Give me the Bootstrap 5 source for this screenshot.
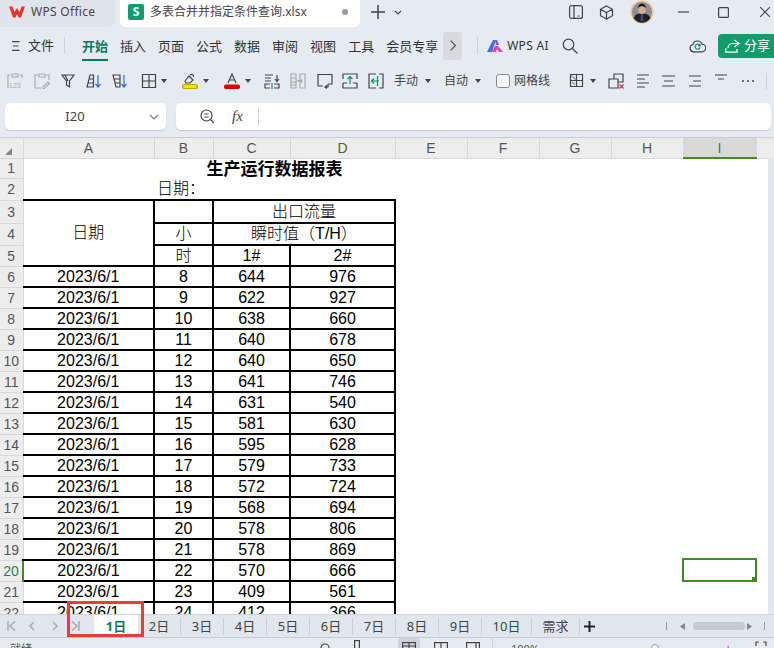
<!DOCTYPE html>
<html lang="zh-CN">
<head>
  <meta charset="UTF-8">
  <title>多表合并并指定条件查询.xlsx - WPS Office</title>
  <meta name="viewport" content="width=device-width, initial-scale=1.0"/>
  <link href="https://cdn.jsdelivr.net/npm/bootstrap@5.3.3/dist/css/bootstrap.min.css" rel="stylesheet">
  <style>
    html, body { height: 100%; }
    body { width: 774px; height: 648px; overflow: hidden; background: #e6eaf1; color: #333;
      font-family: "Noto Sans", "Noto Sans CJK SC", sans-serif; font-size: 13px; line-height: 1; }
    svg { display: block; flex: none; fill: none; stroke: #444; stroke-width: 1.2; }

    /* title bar */
    .title-bar { height: 27px; flex: none; }
    .wps-tab { width: 115px; height: 27px; background: #dfe3ea; border-radius: 0 0 6px 0; padding: 0 0 3px 9px; color: #444; font-size: 12px; letter-spacing: .3px; }
    .wps-tab span { margin-left: 6px; }
    .file-tab { width: 240px; height: 27px; margin-left: 5px; padding: 0 0 3px 8px; background: #fff; border-radius: 0 0 6px 6px; }
    .file-tab .name { margin-left: 6px; font-size: 12px; color: #444; }
    .s-icon { width: 16px; height: 16px; background: #0f9d6b; color: #fff; border-radius: 2px; font-size: 12px; font-weight: 700; }
    .tab-dot { width: 6px; height: 6px; background: #9a9a9a; border-radius: 50%; margin-left: 35px; }
    .plus-ic { margin-top: 5px; margin-left: 11px; }
    .down-ic { margin-top: 10px; margin-left: 9px; }
    .win-tools { height: 24px; }

    /* ribbon tabs */
    .ribbon-tabs { height: 37px; flex: none; padding-left: 12px; color: #333; }
    .ribbon-tabs .rt { margin-left: 12px; height: 37px; line-height: 39px; position: relative; }
    .ribbon-tabs .rt.on { color: #0d7a5f; font-weight: 700; margin-left: 17px; }
    .ribbon-tabs .rt.on::after { content: ""; position: absolute; left: 0; right: 0; bottom: 3px; height: 2px; background: #0d7a5f; }
    .vsep { width: 1px; height: 17px; background: #cdd1d8; flex: none; }
    .more-btn { width: 19px; height: 28px; margin-left: 5px; background: #d9dadd; border-radius: 3px; }
    .ai-text { font-size: 12px; letter-spacing: .3px; }
    .share-btn { width: 56px; height: 24px; background: #0f9d6b; color: #fff; border-radius: 4px 0 0 4px; margin-left: 12px; padding-left: 7px; font-size: 13px; }
    .share-btn span { margin-left: 4px; }

    /* toolbar */
    .tool-bar { height: 34px; flex: none; padding-left: 7px; font-size: 12px; color: #444; }
    .tool-bar svg.ic { width: 16px; height: 16px; }
    .caret { width: 8px; height: 5px; }
    .m3 { margin-left: 3px; } .m4 { margin-left: 4px; } .m6 { margin-left: 6px; } .m8 { margin-left: 8px; } .m9 { margin-left: 9px; }
    .m10 { margin-left: 10px; } .m11 { margin-left: 11px; } .m12 { margin-left: 12px; } .m13 { margin-left: 13px; }
    .m14 { margin-left: 14px; } .m15 { margin-left: 15px; } .m19 { margin-left: 19px; } .m24 { margin-left: 24px; } .m29 { margin-left: 29px; } .m31 { margin-left: 31px; }
    .grid-check { width: 14px; height: 14px; border: 1px solid #888; border-radius: 3px; background: #f4f6f9; }

    /* formula bar */
    .formula-bar { height: 39px; flex: none; padding: 5px 3px 7px 5px; }
    .name-box { width: 161px; background: #fff; border-radius: 5px; box-shadow: 0 1px 1px #c3c6cb; padding: 0 7px 0 0; color: #444; }
    .name-box .cell-ref { flex: 1; text-align: center; padding-right: 4px; }
    .fx-box { flex: 1; margin-left: 10px; background: #fff; border-radius: 5px; box-shadow: 0 1px 1px #c3c6cb; padding-left: 24px; }
    .fx-label { margin-left: 17px; width: 13px; font: italic 15px "Liberation Serif", serif; color: #444; }

    /* sheet */
    .sheet-area { flex: 1; min-height: 0; overflow: hidden; background: #fff; border-top: 1px solid #c9cbce; position: relative; }
    .v-track { position: absolute; right: 0; top: 20px; bottom: 0; width: 6px; background: #e3e7ee; }
    .corner-mark { position: absolute; left: 5px; top: 10px; width: 0; height: 0; border-left: 7px solid transparent; border-bottom: 7px solid #888; }
    .xls { table-layout: fixed; width: 774px; border-collapse: collapse; font-family: "Liberation Sans", "Noto Sans CJK SC", sans-serif; font-size: 16px; color: #000; }
    .c0 { width: 23px; } .ca { width: 131px; } .cb { width: 59px; } .cc { width: 77px; } .cd { width: 105px; }
    .ce { width: 72px; } .ci { width: 73px; } .cz { width: 18px; }
    .xls th { background: #ededed; font-weight: 400; color: #555; text-align: center; font-size: 14px; height: 20px; padding: 0;
      border-right: 1px solid #d8d8d8; border-bottom: 1px solid #d8d8d8; }
    .xls td { padding: 0; height: 21px; text-align: center; white-space: nowrap; }
    .xls td.b { border: 2px solid #000; }
    .xls td.b.a { border-left: 0; }
    .xls th.hot-col { background: #d9d9d9; color: #2a7f5a; border-bottom: 2px solid #3f8f1f; }
    .xls th.hot-row { color: #2a7f5a; border-right: 2px solid #3f8f1f; }
    .xls td.report-title { font-weight: 700; font-size: 17px; padding-top: 2px; }
    .xls td.cn { font-weight: 300; }
    .xls td.date-label { text-align: left; padding-left: 3px; font-weight: 300; }
    .h1r td, .h1r th { height: 20px; }
    .h2r td, .h2r th { height: 22px; }
    .h3r td, .h3r th { height: 23px; }
    .selected-cell { position: absolute; left: 682px; top: 420px; width: 75px; height: 24px; border: 2px solid #3f8f1f; }
    .selected-cell::after { content: ""; position: absolute; right: -2px; bottom: -2px; width: 5px; height: 5px; background: #3f8f1f; }

    /* sheet tabs */
    .sheet-tabs { height: 23px; flex: none; border-top: 1px solid #cfd2d7; position: relative; color: #444; background: #e2e6ed; padding-left: 7px; }
    .tab-nav { width: 87px; }
    .nav-a { margin-left: 13px; } .nav-b { margin-left: 17px; }
    .sheet-tab { width: 43px; text-align: center; border-right: 1px solid #ccd0d6; height: 17px; line-height: 17px; }
    .sheet-tab.on { width: 44px; height: 23px; line-height: 23px; background: #fff; color: #0d7a5f; font-weight: 700; border: 0; }
    .sheet-tab.wide { width: 50px; }
    .sheet-tab.w48 { width: 48px; }
    .tick-sep { width: 1px; height: 8px; background: #999; flex: none; }
    .tick-end { margin-right: 9px; }
    .h-thumb { width: 52px; height: 8px; margin-left: 8px; background: #c7cbd1; border-radius: 4px; }
    .tri-r { margin-left: 2px; }
    .red-mark { position: absolute; left: 67px; top: 601px; width: 77px; height: 36px; border: 3px solid #f03a3a; pointer-events: none; }

    /* status bar */
    .status-bar { height: 11px; flex: none; overflow: hidden; border-top: 1px solid #c9cdd3; position: relative; color: #555; font-size: 11px; }
    .st-item { position: absolute; top: 5px; }
    .st-on { position: absolute; left: 398px; top: 0; width: 22px; height: 11px; background: #cfd3d9; border-radius: 3px 3px 0 0; }
    .s1 { left: 10px; } .s2 { left: 320px; } .s3 { left: 354px; top: 2px; } .s4 { left: 402px; top: 4px; } .s5 { left: 434px; top: 4px; } .s6 { left: 466px; top: 4px; }
    .s7 { left: 492px; top: 0; height: 10px; } .s8 { left: 511px; } .s10 { left: 725px; top: 4px; } .s11 { left: 755px; top: 3px; }
    .s9 { left: 651px; top: 6px; width: 8px; height: 8px; background: #fff; border: 1px solid #999; border-radius: 50%; }
  </style>
</head>
<body class="d-flex flex-column position-relative">

<!-- title bar -->
<div class="title-bar d-flex align-items-start">
  <div class="wps-tab d-flex align-items-center">
    <svg width="16" height="12" viewBox="0 0 16 12"><path d="M0 .5h3.500L5.500 6 8 2l2.500 4 2-5.500H16L12 11.500h-2.500L8 8l-1.500 3.500H4z" fill="#e8362d" stroke="none"/></svg>
    <span>WPS Office</span>
  </div>
  <div class="file-tab d-flex align-items-center">
    <div class="s-icon d-flex align-items-center justify-content-center">S</div>
    <span class="name">多表合并并指定条件查询.xlsx</span>
    <span class="tab-dot"></span>
  </div>
  <svg class="plus-ic" width="14" height="14" viewBox="0 0 14 14"><path d="M7 0v14M0 7h14" stroke-width="1.500"/></svg>
  <svg class="down-ic" width="8" height="5" viewBox="0 0 8 5"><path d="M1 1l3 3 3-3"/></svg>
  <div class="win-tools d-flex align-items-center ms-auto">
    <svg width="14" height="14" viewBox="0 0 14 14"><rect x=".6" y=".6" width="12.800" height="12.800" rx="2"/><path d="M5 .6v12.800M8.500 11h2"/></svg>
    <svg class="ms-3 me-3" width="15" height="15" viewBox="0 0 15 15"><path d="M7.500 1l6 3.300v6.400l-6 3.300-6-3.300V4.300zM1.500 4.300l6 3.300 6-3.300M7.500 7.600V14"/></svg>
    <svg width="24" height="24" viewBox="0 0 24 24" stroke="none"><circle cx="12" cy="12" r="11.500" fill="#eec28e" stroke="none"/><circle cx="12" cy="12" r="10" fill="#8c9096" stroke="none"/><path d="M3.500 18c2-4 5-4.500 8.500-4.500s6.500.5 8.500 4.500A10 10 0 0 1 3.500 18z" fill="#1d2128" stroke="none"/><path d="M11 14h2l.5 7h-3z" fill="#3c4a6c" stroke="none"/><ellipse cx="12" cy="9.500" rx="3.600" ry="4.500" fill="#d8ab8e" stroke="none"/><path d="M8.200 8.500C8 5 10 3.800 12 3.800s4 1.200 3.800 4.700c-1-2-2.500-2.300-3.800-2.300s-2.800.3-3.800 2.300z" fill="#1a1a1a" stroke="none"/></svg>
    <svg class="m24" width="11" height="2" viewBox="0 0 11 2"><path d="M0 1h11"/></svg>
    <svg class="m29" width="11" height="11" viewBox="0 0 11 11"><rect x=".6" y=".6" width="9.800" height="9.800" rx="1"/></svg>
    <svg class="m31" width="10" height="10" viewBox="0 0 10 10"><path d="M0 0l10 10M10 0L0 10"/></svg>
    <span class="m4"></span>
  </div>
</div>

<!-- ribbon tabs -->
<div class="ribbon-tabs d-flex align-items-center">
  <svg width="8" height="10" viewBox="0 0 8 10"><path d="M0 .6h7.500M1 5h5.500M0 9.400h7.500"/></svg>
  <span class="m8">文件</span>
  <span class="vsep m10"></span>
  <span class="rt on">开始</span>
  <span class="rt">插入</span><span class="rt">页面</span><span class="rt">公式</span><span class="rt">数据</span>
  <span class="rt">审阅</span><span class="rt">视图</span><span class="rt">工具</span><span class="rt">会员专享</span>
  <div class="more-btn d-flex align-items-center justify-content-center">
    <svg width="6" height="11" viewBox="0 0 6 11"><path d="M.7.700l4.600 4.800L.7 10.300" stroke="#555"/></svg>
  </div>
  <span class="vsep m15"></span>
  <svg class="m9" width="16" height="12" viewBox="0 0 16 12"><path d="M0 12L6 0h3L5 12z" fill="#3b6ff0" stroke="none"/><path d="M5 12l3-6 3 0 5 6h-4l-2-3-1 3z" fill="#ef3f9c" stroke="none"/><path d="M8 0h2l2 5H9z" fill="#7a55ee" stroke="none"/></svg>
  <span class="m4 ai-text">WPS AI</span>
  <svg class="m13" width="16" height="16" viewBox="0 0 16 16"><circle cx="6.500" cy="6.500" r="5.300"/><path d="M10.500 10.500l5 5"/></svg>
  <svg class="ms-auto" width="17" height="14" viewBox="0 0 17 14"><path d="M4.500 12.800a3.700 3.700 0 0 1-.5-7.300 4.700 4.700 0 0 1 9-.3 3.800 3.800 0 0 1 0 7.600z"/><path d="M10.800 6.500a2.500 2.500 0 1 0 .2 2M11 4.800v2h-2" stroke="#0f8f62"/></svg>
  <div class="share-btn d-flex align-items-center">
    <svg width="15" height="14" viewBox="0 0 15 14"><path d="M9.500 1l4.500 3.500-4.500 3.500M14 4.500H8C4.500 4.500 3 7 3 9M.8 9v4.200H12V10" stroke="#fff"/></svg>
    <span>分享</span>
  </div>
</div>

<!-- toolbar -->
<div class="tool-bar d-flex align-items-center">
  <svg class="ic" viewBox="0 0 16 16"><path d="M3 2H1v13M13 2h2v3M5 1h6v3H5z" stroke="#aaa"/><text x="2" y="15" font-size="7" fill="#aaa" stroke="none" font-family="Liberation Sans">123</text></svg>
  <svg class="ic m11" viewBox="0 0 16 16"><path d="M4 2H1v13h6M12 2h3v5M5 1h6v3H5zM9 14l5-5 1.500 1.500-5 5H9z" stroke="#aaa"/></svg>
  <svg class="ic m10" viewBox="0 0 16 16"><path d="M2 2h12L9.500 8v6l-3-2V8zM5 2l3 6"/></svg>
  <svg class="ic m10" viewBox="0 0 16 16"><path d="M4 2h3.500v12H1zM2 10h5.500M3 6h4.500"/><path d="M12 2v12M9.500 11l2.500 3 2.500-3" stroke="#2f6fe0"/></svg>
  <svg class="ic m10" viewBox="0 0 16 16"><path d="M1 2h7v12H4zM2 6h6M3 10h5"/><path d="M12 2v12M9.500 11l2.500 3 2.500-3" stroke="#2f6fe0"/></svg>
  <svg class="ic m13" viewBox="0 0 16 16"><path d="M1.500 1.500h13v13h-13zM8 1.500v13M1.500 8h13"/></svg>
  <svg class="caret m3" viewBox="0 0 8 5"><path d="M1 0h6L4 4z" fill="#444" stroke="none"/></svg>
  <svg class="ic m14" viewBox="0 0 16 16"><path d="M3 8l4-5 4 4-3 3H4zM8 2c2-1.500 4 0 3.500 2"/><rect x=".5" y="11.500" width="15" height="4" rx="2" fill="#f5e600" stroke="#b5a800"/></svg>
  <svg class="caret m4" viewBox="0 0 8 5"><path d="M1 0h6L4 4z" fill="#444" stroke="none"/></svg>
  <svg class="ic m14" viewBox="0 0 16 16"><path d="M4 10L8 1l4 9M5.500 7h5"/><rect x="0" y="11.500" width="16" height="4.500" rx="2" fill="#e00000" stroke="none"/></svg>
  <svg class="caret m4" viewBox="0 0 8 5"><path d="M1 0h6L4 4z" fill="#444" stroke="none"/></svg>
  <svg class="ic m12" viewBox="0 0 16 16"><path d="M1 2h8M1 5h6M1 8h6M13 2v6M11 6l2 2.500L15 6M6 11H1v4h5M10 11h5v4h-5"/><path d="M8 10v6" stroke="#0f8f62"/></svg>
  <svg class="ic m10" viewBox="0 0 16 16"><path d="M1 1h5v14H1zM10 1h5v14h-5zM1 5h5M1 9h5M1 12h5M7.500 7l1.500 1.500M9 7L7.500 8.500" stroke="#aaa"/><path d="M12 6.500L11 8l1 1.500" stroke="#6aaa90"/></svg>
  <svg class="ic m11" viewBox="0 0 16 16"><path d="M1 13V1.500h14V11h-4M1 13h5"/><path d="M11 11v3H8M10 12.500L8 14l2 1.500"/></svg>
  <svg class="ic m9" viewBox="0 0 16 16"><path d="M1 6V1h14v5M1 10v5h14v-5M5 10H1M15 10h-4"/><path d="M8 11V3.500M5.500 6L8 3.500 10.500 6" stroke="#0f8f62"/></svg>
  <svg class="ic m10" viewBox="0 0 16 16"><path d="M8 1H1v14h7M11 1h4v14h-4"/><path d="M11 8H3.500M6 5.500L3.500 8 6 10.500M9.500 3v10" stroke="#0f8f62"/></svg>
  <span class="m10">手动</span>
  <svg class="caret m6" viewBox="0 0 8 5"><path d="M1 0h6L4 4z" fill="#444" stroke="none"/></svg>
  <span class="m12">自动</span>
  <svg class="caret m6" viewBox="0 0 8 5"><path d="M1 0h6L4 4z" fill="#444" stroke="none"/></svg>
  <span class="grid-check m14"></span>
  <span class="m4">网格线</span>
  <svg class="ic m19" viewBox="0 0 16 16"><path d="M1.500 1.500h12v12h-12zM7.500 1.500v12M1.500 7.500h12"/><path d="M2 2l5 5M3 9l3 3" stroke="#999"/></svg>
  <svg class="caret m4" viewBox="0 0 8 5"><path d="M1 0h6L4 4z" fill="#444" stroke="none"/></svg>
  <svg class="ic m11" viewBox="0 0 16 16"><path d="M6 6V1h9v8h-5M1 6h9v9H1z"/><path d="M11.500 11.500l4 4M15.500 11.500l-4 4" stroke="#d0304a"/></svg>
  <svg class="ic m12" viewBox="0 0 16 16"><path d="M1 2h12M1 6h8M1 10h12M1 14h8"/></svg>
  <svg class="ic m9" viewBox="0 0 16 16"><path d="M1 3h13M3 8h9M1 13h13"/></svg>
  <svg class="ic m10" viewBox="0 0 16 16"><path d="M2 3h12M6 8h8M2 13h12"/></svg>
  <svg class="ic m11" viewBox="0 0 16 16"><path d="M1 2h12M4 6h6"/></svg>
  <svg class="ic m10" viewBox="0 0 16 16"><path d="M2 8h2M7 8h2M12 8h2" stroke-width="1.500"/></svg>
  <span class="vsep m10"></span>
</div>

<!-- formula bar -->
<div class="formula-bar d-flex">
  <div class="name-box d-flex align-items-center">
    <span class="cell-ref">I20</span>
    <svg width="10" height="6" viewBox="0 0 10 6"><path d="M1 1l4 4 4-4" stroke="#777"/></svg>
  </div>
  <div class="fx-box d-flex align-items-center">
    <svg width="15" height="15" viewBox="0 0 15 15"><circle cx="6.500" cy="6.500" r="5.500"/><path d="M4.500 5h4M4.500 8h4M10.500 10.500l3.500 3.500"/></svg>
    <span class="fx-label">fx</span>
    <span class="vsep m13"></span>
  </div>
</div>

<!-- sheet -->
<div class="sheet-area">
  <table class="xls">
    <colgroup>
      <col class="c0"><col class="ca"><col class="cb"><col class="cc"><col class="cd">
      <col class="ce"><col class="ce"><col class="ce"><col class="ce"><col class="ci"><col class="cz">
    </colgroup>
    <tr>
      <th></th><th>A</th><th>B</th><th>C</th><th>D</th><th>E</th><th>F</th><th>G</th><th>H</th><th class="hot-col">I</th><th></th>
    </tr>
    <tr class="h1r"><th>1</th><td></td><td colspan="3" class="report-title">生产运行数据报表</td></tr>
    <tr class="h2r"><th>2</th><td></td><td colspan="3" class="date-label">日期：</td></tr>
    <tr class="h3r"><th>3</th><td rowspan="3" class="b a cn">日期</td><td class="b"></td><td colspan="2" class="b cn">出口流量</td></tr>
    <tr class="h2r"><th>4</th><td class="b cn">小</td><td colspan="2" class="b cn">瞬时值（T/H）</td></tr>
    <tr><th>5</th><td class="b cn">时</td><td class="b">1#</td><td class="b">2#</td></tr>
    <tr><th>6</th><td class="b a">2023/6/1</td><td class="b">8</td><td class="b">644</td><td class="b">976</td></tr>
    <tr><th>7</th><td class="b a">2023/6/1</td><td class="b">9</td><td class="b">622</td><td class="b">927</td></tr>
    <tr><th>8</th><td class="b a">2023/6/1</td><td class="b">10</td><td class="b">638</td><td class="b">660</td></tr>
    <tr><th>9</th><td class="b a">2023/6/1</td><td class="b">11</td><td class="b">640</td><td class="b">678</td></tr>
    <tr><th>10</th><td class="b a">2023/6/1</td><td class="b">12</td><td class="b">640</td><td class="b">650</td></tr>
    <tr><th>11</th><td class="b a">2023/6/1</td><td class="b">13</td><td class="b">641</td><td class="b">746</td></tr>
    <tr><th>12</th><td class="b a">2023/6/1</td><td class="b">14</td><td class="b">631</td><td class="b">540</td></tr>
    <tr><th>13</th><td class="b a">2023/6/1</td><td class="b">15</td><td class="b">581</td><td class="b">630</td></tr>
    <tr><th>14</th><td class="b a">2023/6/1</td><td class="b">16</td><td class="b">595</td><td class="b">628</td></tr>
    <tr><th>15</th><td class="b a">2023/6/1</td><td class="b">17</td><td class="b">579</td><td class="b">733</td></tr>
    <tr><th>16</th><td class="b a">2023/6/1</td><td class="b">18</td><td class="b">572</td><td class="b">724</td></tr>
    <tr><th>17</th><td class="b a">2023/6/1</td><td class="b">19</td><td class="b">568</td><td class="b">694</td></tr>
    <tr><th>18</th><td class="b a">2023/6/1</td><td class="b">20</td><td class="b">578</td><td class="b">806</td></tr>
    <tr><th>19</th><td class="b a">2023/6/1</td><td class="b">21</td><td class="b">578</td><td class="b">869</td></tr>
    <tr><th class="hot-row">20</th><td class="b a">2023/6/1</td><td class="b">22</td><td class="b">570</td><td class="b">666</td></tr>
    <tr><th>21</th><td class="b a">2023/6/1</td><td class="b">23</td><td class="b">409</td><td class="b">561</td></tr>
    <tr><th>22</th><td class="b a">2023/6/1</td><td class="b">24</td><td class="b">412</td><td class="b">366</td></tr>
  </table>
  <div class="corner-mark"></div>
  <div class="v-track"></div>
  <div class="selected-cell"></div>
</div>

<!-- sheet tabs -->
<div class="sheet-tabs d-flex align-items-center">
  <div class="tab-nav d-flex align-items-center">
    <svg width="9" height="10" viewBox="0 0 9 10"><path d="M1 0v10M8 .5L3 5l5 4.500" stroke="#aaa" stroke-width="1.500"/></svg>
    <svg class="nav-a" width="6" height="10" viewBox="0 0 6 10"><path d="M5 1L1 5l4 4" stroke="#aaa" stroke-width="1.500"/></svg>
    <svg class="nav-b" width="6" height="10" viewBox="0 0 6 10"><path d="M1 1l4 4-4 4" stroke="#aaa" stroke-width="1.500"/></svg>
    <svg class="nav-a" width="9" height="10" viewBox="0 0 9 10"><path d="M8 0v10M1 .5L6 5 1 9.500" stroke="#aaa" stroke-width="1.500"/></svg>
  </div>
  <div class="sheet-tab on">1日</div>
  <div class="sheet-tab">2日</div><div class="sheet-tab">3日</div><div class="sheet-tab">4日</div>
  <div class="sheet-tab">5日</div><div class="sheet-tab">6日</div><div class="sheet-tab">7日</div>
  <div class="sheet-tab">8日</div><div class="sheet-tab">9日</div>
  <div class="sheet-tab wide">10日</div><div class="sheet-tab w48">需求</div>
  <svg class="m4" width="11" height="11" viewBox="0 0 11 11"><path d="M5.500 0v11M0 5.500h11" stroke="#222" stroke-width="2"/></svg>
  <div class="d-flex align-items-center ms-auto">
    <span class="tick-sep"></span>
    <svg class="m13" width="5" height="7" viewBox="0 0 5 7"><path d="M5 0v7L0 3.500z" fill="#888" stroke="none"/></svg>
    <div class="h-thumb"></div>
    <svg class="tri-r" width="5" height="7" viewBox="0 0 5 7"><path d="M0 0v7l5-3.500z" fill="#888" stroke="none"/></svg>
    <span class="tick-sep m12 tick-end"></span>
  </div>
</div>

<!-- status bar (cut off by the window) -->
<div class="status-bar">
  <span class="st-item s1">就绪</span>
  <span class="st-on"></span>
  <svg class="st-item s2" width="10" height="10" viewBox="0 0 10 10"><circle cx="5" cy="5" r="4"/></svg>
  <svg class="st-item s3" width="6" height="10" viewBox="0 0 6 10"><rect x=".6" y=".6" width="4.800" height="9"/></svg>
  <svg class="st-item s4" width="14" height="10" viewBox="0 0 14 10"><rect x=".6" y=".6" width="12.800" height="12"/><path d="M.6 4h13M7 .6v9"/></svg>
  <svg class="st-item s5" width="14" height="10" viewBox="0 0 14 10"><rect x=".6" y=".6" width="12.800" height="12"/><path d="M7 .6v9"/></svg>
  <svg class="st-item s6" width="14" height="10" viewBox="0 0 14 10"><rect x=".6" y=".6" width="12.800" height="12"/><path d="M10 .6v9"/></svg>
  <span class="st-item vsep s7"></span>
  <span class="st-item s8">100%</span>
  <span class="st-item s9"></span>
  <span class="st-item s10">+</span>
  <svg class="st-item s11" width="12" height="10" viewBox="0 0 12 10"><path d="M1 5V1h3M8 1h3v4"/></svg>
</div>

<!-- red note round the first sheet tab -->
<div class="red-mark"></div>
</body>
</html>
